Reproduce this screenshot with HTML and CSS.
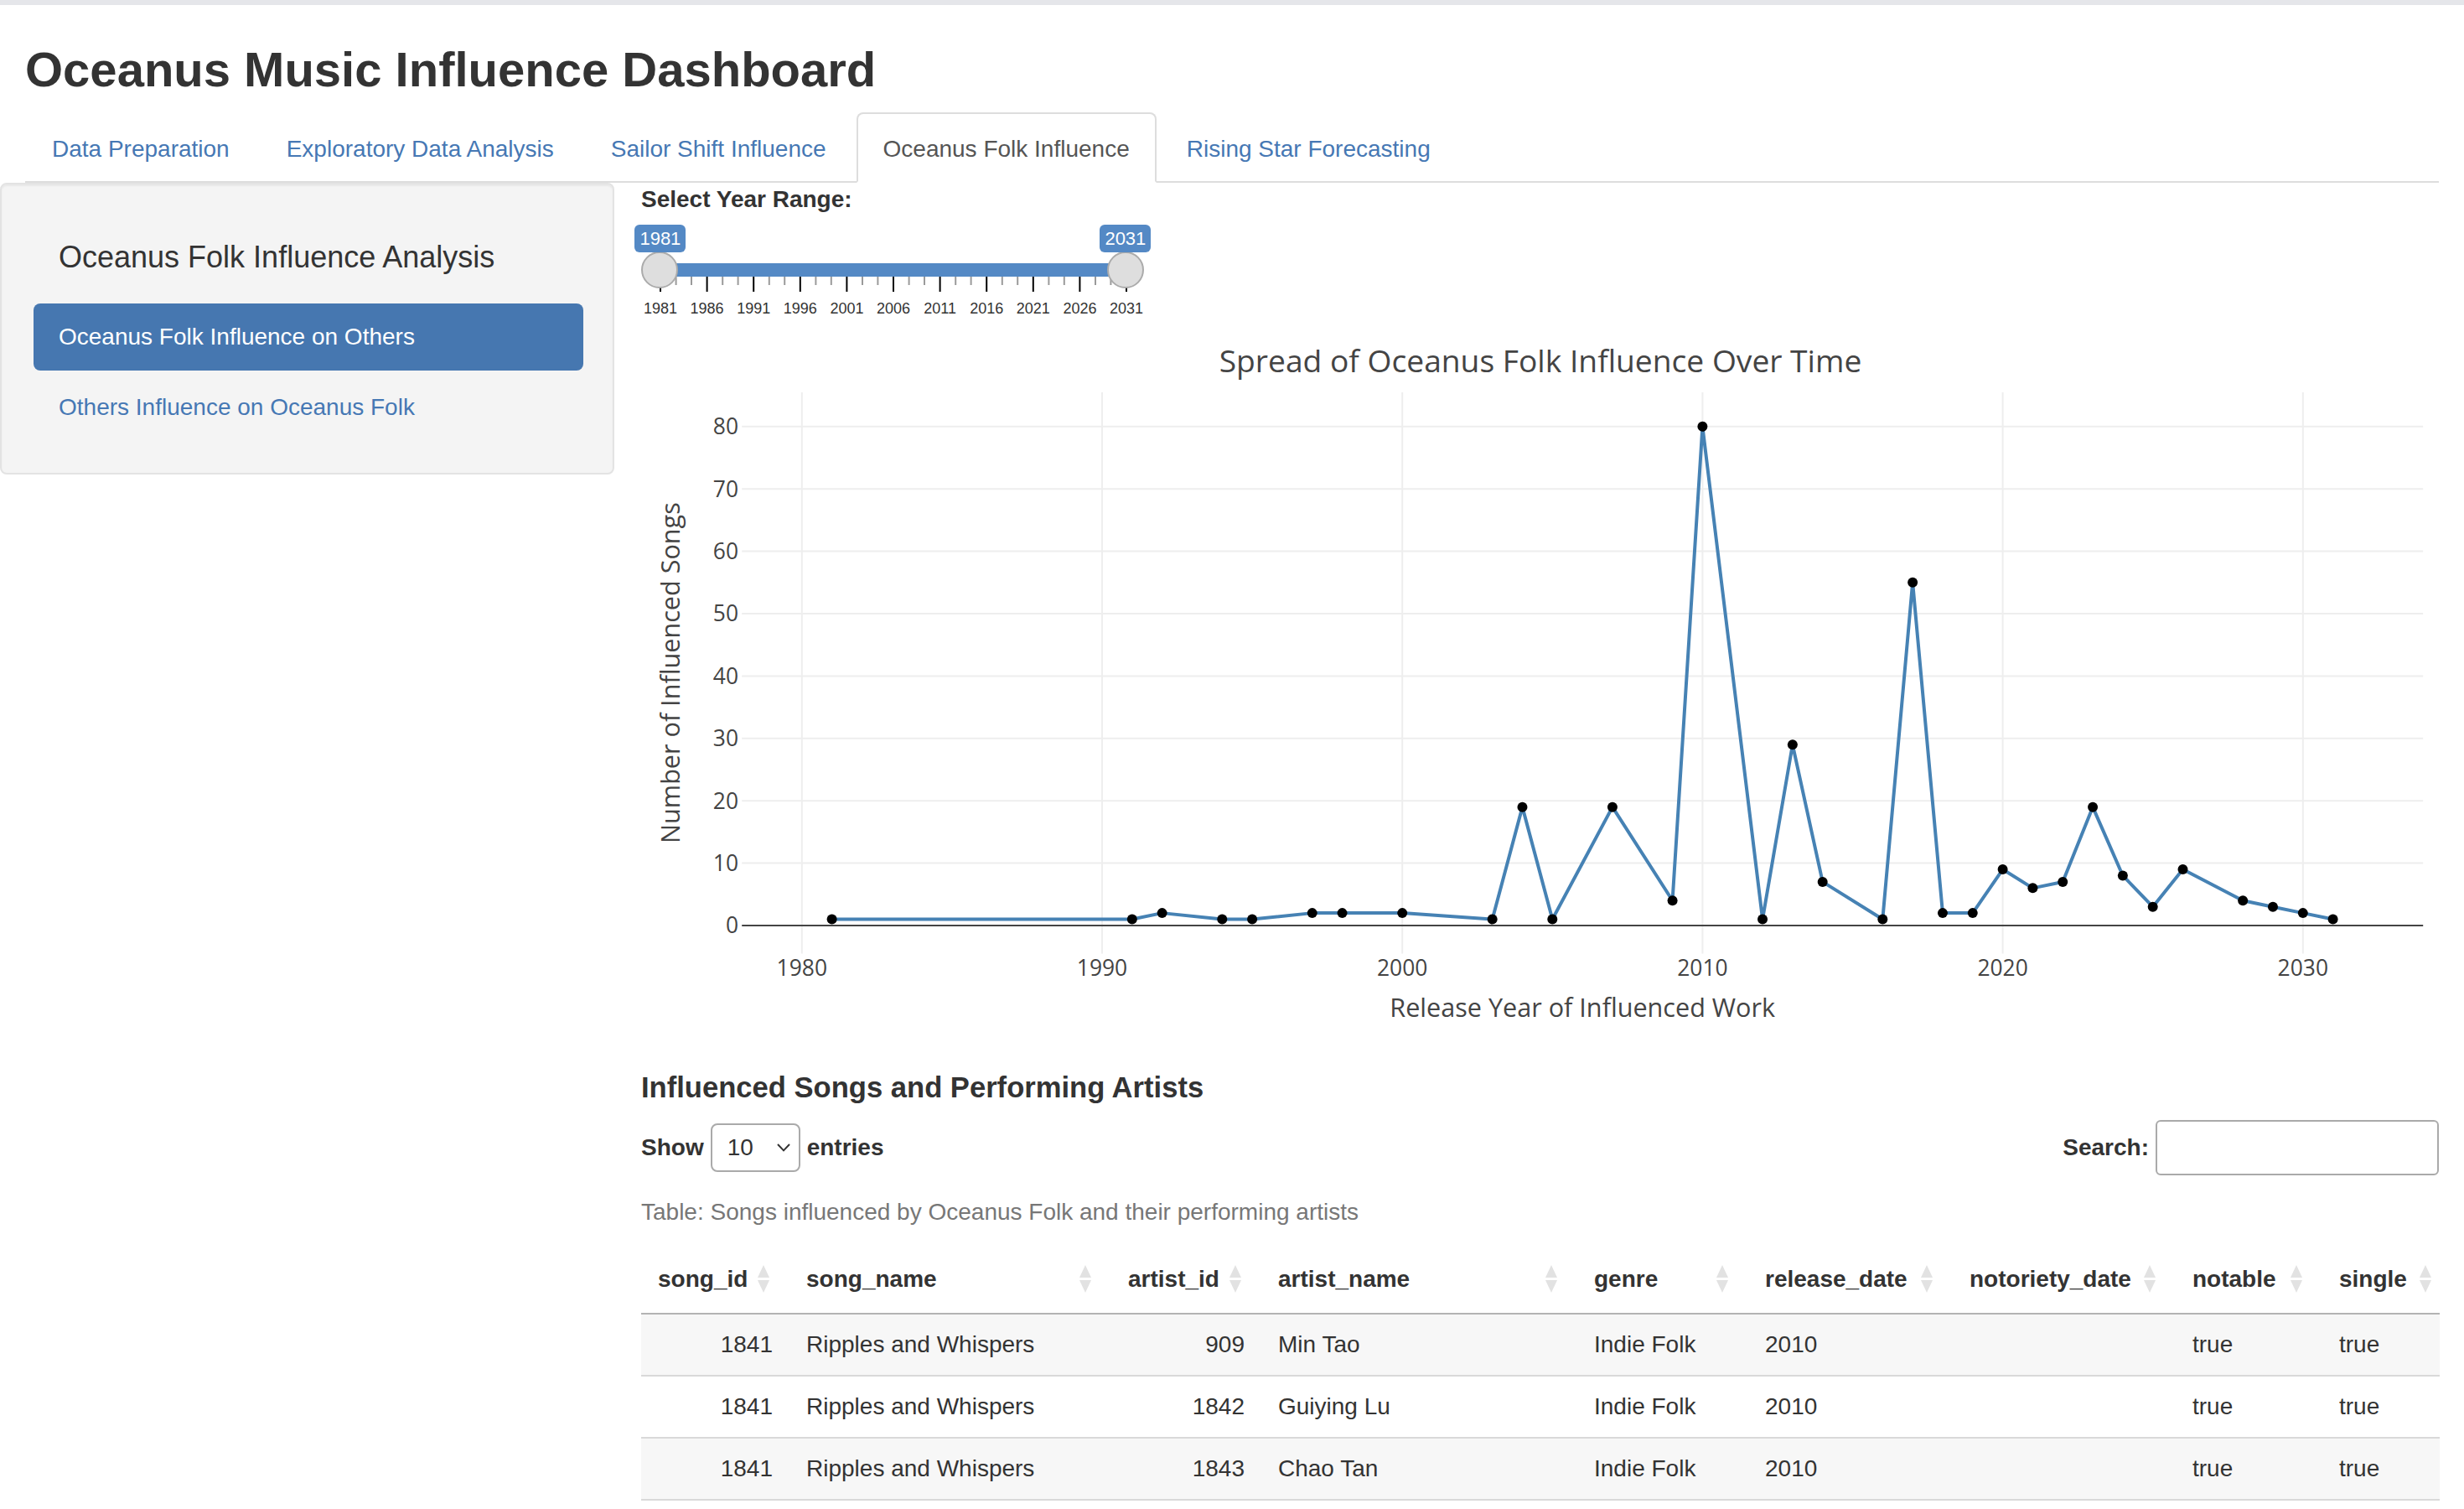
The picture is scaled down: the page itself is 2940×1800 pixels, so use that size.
FILE: index.html
```html
<!DOCTYPE html>
<html lang="en">
<head>
<meta charset="utf-8">
<title>Oceanus Music Influence Dashboard</title>
<link rel="stylesheet" href="styles.css">
</head>
<body>
<div class="page">
  <div class="container">
    <h2 class="title">Oceanus Music Influence Dashboard</h2>
    <ul class="nav-tabs">
      <li><a>Data Preparation</a></li>
      <li><a>Exploratory Data Analysis</a></li>
      <li><a>Sailor Shift Influence</a></li>
      <li class="active"><a>Oceanus Folk Influence</a></li>
      <li><a>Rising Star Forecasting</a></li>
    </ul>
  </div>
  <div class="layout">
    <aside class="well">
      <ul class="nav-stacked">
        <li class="brand">Oceanus Folk Influence Analysis</li>
        <li class="pill active"><a>Oceanus Folk Influence on Others</a></li>
        <li class="pill"><a>Others Influence on Oceanus Folk</a></li>
      </ul>
    </aside>
    <main class="main">
      <div class="form-group">
        <label class="control-label">Select Year Range:</label>
        <div class="irs">
          <span class="irs-line"></span>
          <span class="irs-bar"></span>
          <svg class="irs-grid" width="300" height="28" viewBox="0 0 300 28">
            <g class="minor">
              <line x1="20.8" y1="0" x2="20.8" y2="5"/><line x1="30" y1="0" x2="30" y2="5"/>
              <line x1="48.6" y1="0" x2="48.6" y2="5"/><line x1="57.8" y1="0" x2="57.8" y2="5"/>
              <line x1="76.4" y1="0" x2="76.4" y2="5"/><line x1="85.6" y1="0" x2="85.6" y2="5"/>
              <line x1="104.2" y1="0" x2="104.2" y2="5"/><line x1="113.4" y1="0" x2="113.4" y2="5"/>
              <line x1="132" y1="0" x2="132" y2="5"/><line x1="141.2" y1="0" x2="141.2" y2="5"/>
              <line x1="159.8" y1="0" x2="159.8" y2="5"/><line x1="169" y1="0" x2="169" y2="5"/>
              <line x1="187.6" y1="0" x2="187.6" y2="5"/><line x1="196.8" y1="0" x2="196.8" y2="5"/>
              <line x1="215.4" y1="0" x2="215.4" y2="5"/><line x1="224.6" y1="0" x2="224.6" y2="5"/>
              <line x1="243.2" y1="0" x2="243.2" y2="5"/><line x1="252.4" y1="0" x2="252.4" y2="5"/>
              <line x1="271" y1="0" x2="271" y2="5"/><line x1="280.2" y1="0" x2="280.2" y2="5"/>
            </g>
            <g class="major">
              <line x1="11.5" y1="0" x2="11.5" y2="9"/>
              <line x1="39.3" y1="0" x2="39.3" y2="9"/>
              <line x1="67.1" y1="0" x2="67.1" y2="9"/>
              <line x1="94.9" y1="0" x2="94.9" y2="9"/>
              <line x1="122.7" y1="0" x2="122.7" y2="9"/>
              <line x1="150.5" y1="0" x2="150.5" y2="9"/>
              <line x1="178.3" y1="0" x2="178.3" y2="9"/>
              <line x1="206.1" y1="0" x2="206.1" y2="9"/>
              <line x1="233.9" y1="0" x2="233.9" y2="9"/>
              <line x1="261.7" y1="0" x2="261.7" y2="9"/>
              <line x1="289.5" y1="0" x2="289.5" y2="9"/>
            </g>
            <g class="grid-text">
              <text x="11.5" y="22">1981</text>
              <text x="39.3" y="22">1986</text>
              <text x="67.1" y="22">1991</text>
              <text x="94.9" y="22">1996</text>
              <text x="122.7" y="22">2001</text>
              <text x="150.5" y="22">2006</text>
              <text x="178.3" y="22">2011</text>
              <text x="206.1" y="22">2016</text>
              <text x="233.9" y="22">2021</text>
              <text x="261.7" y="22">2026</text>
              <text x="289.5" y="22">2031</text>
            </g>
          </svg>
          <span class="irs-handle from"></span>
          <span class="irs-handle to"></span>
          <span class="irs-label from">1981</span>
          <span class="irs-label to">2031</span>
        </div>
      </div>

      <svg class="chart" width="1073" height="420" viewBox="0 0 1073 420">
        <g class="gridlines">
          <line x1="95.9" y1="34" x2="95.9" y2="368.7"/>
          <line x1="275" y1="34" x2="275" y2="368.7"/>
          <line x1="454.1" y1="34" x2="454.1" y2="368.7"/>
          <line x1="633.2" y1="34" x2="633.2" y2="368.7"/>
          <line x1="812.3" y1="34" x2="812.3" y2="368.7"/>
          <line x1="991.4" y1="34" x2="991.4" y2="368.7"/>
          <line x1="60.1" y1="314.8" x2="1063.1" y2="314.8"/>
          <line x1="60.1" y1="277.6" x2="1063.1" y2="277.6"/>
          <line x1="60.1" y1="240.4" x2="1063.1" y2="240.4"/>
          <line x1="60.1" y1="203.2" x2="1063.1" y2="203.2"/>
          <line x1="60.1" y1="166" x2="1063.1" y2="166"/>
          <line x1="60.1" y1="128.8" x2="1063.1" y2="128.8"/>
          <line x1="60.1" y1="91.6" x2="1063.1" y2="91.6"/>
          <line x1="60.1" y1="54.4" x2="1063.1" y2="54.4"/>
        </g>
        <line class="zeroline" x1="60.1" y1="352" x2="1063.1" y2="352"/>
        <polyline class="series" points="113.81,348.28 292.91,348.28 310.82,344.56 346.64,348.28 364.55,348.28 400.37,344.56 418.28,344.56 454.1,344.56 507.83,348.28 525.74,281.32 543.65,348.28 579.47,281.32 615.29,337.12 633.2,54.4 669.02,348.28 686.93,244.12 704.84,325.96 740.66,348.28 758.57,147.4 776.48,344.56 794.39,344.56 812.3,318.52 830.21,329.68 848.12,325.96 866.03,281.32 883.94,322.24 901.85,340.84 919.76,318.52 955.58,337.12 973.49,340.84 991.4,344.56 1009.31,348.28"/>
        <g class="markers">
          <circle cx="113.81" cy="348.28" r="3"/><circle cx="292.91" cy="348.28" r="3"/>
          <circle cx="310.82" cy="344.56" r="3"/><circle cx="346.64" cy="348.28" r="3"/>
          <circle cx="364.55" cy="348.28" r="3"/><circle cx="400.37" cy="344.56" r="3"/>
          <circle cx="418.28" cy="344.56" r="3"/><circle cx="454.1" cy="344.56" r="3"/>
          <circle cx="507.83" cy="348.28" r="3"/><circle cx="525.74" cy="281.32" r="3"/>
          <circle cx="543.65" cy="348.28" r="3"/><circle cx="579.47" cy="281.32" r="3"/>
          <circle cx="615.29" cy="337.12" r="3"/><circle cx="633.2" cy="54.4" r="3"/>
          <circle cx="669.02" cy="348.28" r="3"/><circle cx="686.93" cy="244.12" r="3"/>
          <circle cx="704.84" cy="325.96" r="3"/><circle cx="740.66" cy="348.28" r="3"/>
          <circle cx="758.57" cy="147.4" r="3"/><circle cx="776.48" cy="344.56" r="3"/>
          <circle cx="794.39" cy="344.56" r="3"/><circle cx="812.3" cy="318.52" r="3"/>
          <circle cx="830.21" cy="329.68" r="3"/><circle cx="848.12" cy="325.96" r="3"/>
          <circle cx="866.03" cy="281.32" r="3"/><circle cx="883.94" cy="322.24" r="3"/>
          <circle cx="901.85" cy="340.84" r="3"/><circle cx="919.76" cy="318.52" r="3"/>
          <circle cx="955.58" cy="337.12" r="3"/><circle cx="973.49" cy="340.84" r="3"/>
          <circle cx="991.4" cy="344.56" r="3"/><circle cx="1009.31" cy="348.28" r="3"/>
        </g>
        <g class="yticks">
          <text x="58" y="356.7">0</text>
          <text x="58" y="319.5">10</text>
          <text x="58" y="282.3">20</text>
          <text x="58" y="245.1">30</text>
          <text x="58" y="207.9">40</text>
          <text x="58" y="170.7">50</text>
          <text x="58" y="133.5">60</text>
          <text x="58" y="96.3">70</text>
          <text x="58" y="59.1">80</text>
        </g>
        <g class="xticks">
          <text x="95.9" y="382.2">1980</text>
          <text x="275" y="382.2">1990</text>
          <text x="454.1" y="382.2">2000</text>
          <text x="633.2" y="382.2">2010</text>
          <text x="812.3" y="382.2">2020</text>
          <text x="991.4" y="382.2">2030</text>
        </g>
        <text class="axis-title" x="561.6" y="406.5">Release Year of Influenced Work</text>
        <text class="axis-title" transform="translate(23,201.3) rotate(-90)">Number of Influenced Songs</text>
        <text class="chart-title" x="536.5" y="22.2">Spread of Oceanus Folk Influence Over Time</text>
      </svg>

      <h4 class="section-title">Influenced Songs and Performing Artists</h4>

      <div class="dt-top">
        <label class="dt-length">Show
          <span class="select"><span>10</span>
            <svg class="chev" width="8" height="5" viewBox="0 0 8 5"><polyline points="0.5,0.5 4,4.2 7.5,0.5"/></svg>
          </span>
          entries</label>
        <label class="dt-filter">Search:<span class="search-input"></span></label>
      </div>

      <table class="dt">
        <caption>Table: Songs influenced by Oceanus Folk and their performing artists</caption>
        <colgroup>
          <col class="c-songid"><col class="c-songname"><col class="c-artistid"><col class="c-artistname"><col class="c-genre"><col class="c-release"><col class="c-notoriety"><col class="c-notable"><col class="c-single">
        </colgroup>
        <thead>
          <tr>
            <th><div class="th-in"><span>song_id</span><span class="sort"><i class="up"></i><i class="down"></i></span></div></th>
            <th><div class="th-in"><span>song_name</span><span class="sort"><i class="up"></i><i class="down"></i></span></div></th>
            <th><div class="th-in"><span>artist_id</span><span class="sort"><i class="up"></i><i class="down"></i></span></div></th>
            <th><div class="th-in"><span>artist_name</span><span class="sort"><i class="up"></i><i class="down"></i></span></div></th>
            <th><div class="th-in"><span>genre</span><span class="sort"><i class="up"></i><i class="down"></i></span></div></th>
            <th><div class="th-in"><span>release_date</span><span class="sort"><i class="up"></i><i class="down"></i></span></div></th>
            <th><div class="th-in"><span>notoriety_date</span><span class="sort"><i class="up"></i><i class="down"></i></span></div></th>
            <th><div class="th-in"><span>notable</span><span class="sort"><i class="up"></i><i class="down"></i></span></div></th>
            <th class="last"><div class="th-in"><span>single</span><span class="sort"><i class="up"></i><i class="down"></i></span></div></th>
          </tr>
        </thead>
        <tbody>
          <tr>
            <td class="num">1841</td><td>Ripples and Whispers</td><td class="num">909</td><td>Min Tao</td><td>Indie Folk</td><td>2010</td><td></td><td>true</td><td>true</td>
          </tr>
          <tr>
            <td class="num">1841</td><td>Ripples and Whispers</td><td class="num">1842</td><td>Guiying Lu</td><td>Indie Folk</td><td>2010</td><td></td><td>true</td><td>true</td>
          </tr>
          <tr>
            <td class="num">1841</td><td>Ripples and Whispers</td><td class="num">1843</td><td>Chao Tan</td><td>Indie Folk</td><td>2010</td><td></td><td>true</td><td>true</td>
          </tr>
        </tbody>
      </table>
    </main>
  </div>
</div>
</body>
</html>
```

FILE: styles.css
```css
* { box-sizing: border-box; }

html { zoom: 2; }

html, body {
  margin: 0;
  padding: 0;
  overflow: hidden;
  background: #ffffff;
}

body {
  font-family: "Liberation Sans", Arial, Helvetica, sans-serif;
  font-size: 14px;
  line-height: 20px;
  color: #333333;
}

.page {
  width: 1470px;
  height: 900px;
  overflow: hidden;
  border-top: 3px solid #e5e6ea;
}

.container {
  padding: 0 15px;
}

.title {
  margin: 22px 0 9px;
  font-size: 29px;
  line-height: 33px;
  font-weight: 700;
  color: #333333;
}

/* ---------- tabs ---------- */
.nav-tabs {
  display: flex;
  margin: 0;
  padding: 0;
  list-style: none;
  border-bottom: 1px solid #dddddd;
}

.nav-tabs li {
  margin-bottom: -1px;
}

.nav-tabs a {
  display: block;
  margin-right: 2px;
  padding: 11px 15px 9px;
  line-height: 20px;
  border: 1px solid transparent;
  border-radius: 4px 4px 0 0;
  color: #4678b4;
}

.nav-tabs li.active a {
  color: #555555;
  background: #ffffff;
  border-color: #dddddd #dddddd transparent;
}

/* ---------- layout ---------- */
.layout {
  display: flex;
  align-items: flex-start;
  padding-right: 15px;
}

.well {
  flex: none;
  width: 366.5px;
  margin-top: 0;
  padding: 19px;
  background: #f4f4f4;
  border: 1px solid #e3e3e3;
  border-radius: 4px;
  box-shadow: inset 0 1px 1px rgba(0, 0, 0, 0.05);
}

.nav-stacked {
  margin: 0;
  padding: 0;
  list-style: none;
}

.brand {
  height: 50px;
  padding: 15px;
  font-size: 18px;
  line-height: 19px;
  color: #333333;
}

.pill {
  margin-top: 2px;
  margin-right: -1.5px;
}

.pill a {
  display: block;
  padding: 10px 15px;
  border-radius: 4px;
  color: #4678b4;
}

.pill.active a {
  background: #4677b0;
  color: #ffffff;
}

.main {
  flex: 1;
  min-width: 0;
  margin-left: 16px;
}

/* ---------- slider ---------- */
.form-group {
  margin-bottom: 6px;
}

.control-label {
  display: inline-block;
  margin-bottom: 5px;
  font-weight: 700;
}

.irs {
  position: relative;
  width: 300px;
  height: 60px;
}

.irs-line {
  position: absolute;
  left: 11px;
  right: 11px;
  top: 23px;
  height: 8px;
  background: #ededed;
  border-radius: 8px;
}

.irs-bar {
  position: absolute;
  left: 11px;
  width: 278px;
  top: 23px;
  height: 8px;
  background: #5489c5;
}

.irs-grid {
  position: absolute;
  left: 0;
  top: 31px;
  display: block;
}

.irs-grid .major line {
  stroke: #000000;
  stroke-width: 1;
}

.irs-grid .minor line {
  stroke: #9a9a9a;
  stroke-width: 1;
}

.grid-text text {
  font-family: "Liberation Sans", Arial, sans-serif;
  font-size: 9px;
  fill: #333333;
  text-anchor: middle;
}

.irs-handle {
  position: absolute;
  top: 16px;
  width: 22px;
  height: 22px;
  background: #dedede;
  border: 1px solid #ababab;
  border-radius: 50%;
}

.irs-handle.from { left: 0; }
.irs-handle.to { left: 278px; }

.irs-label {
  position: absolute;
  top: 0;
  padding: 1px 3px;
  font-size: 11px;
  line-height: 14.5px;
  color: #ffffff;
  background: #5489c5;
  border-radius: 3px;
}

.irs-label.from { left: -3.8px; }
.irs-label.to { left: 273.7px; }

/* ---------- chart ---------- */
.chart {
  display: block;
}

.chart text {
  font-family: "Open Sans", "Liberation Sans", sans-serif;
  fill: #444444;
}

.gridlines line {
  stroke: #eeeeee;
  stroke-width: 1;
}

.zeroline {
  stroke: #444444;
  stroke-width: 1;
}

.series {
  fill: none;
  stroke: #4682b4;
  stroke-width: 2;
  stroke-linejoin: round;
}

.markers circle {
  fill: #000000;
}

.yticks text {
  font-size: 13.2px;
  text-anchor: end;
}

.xticks text {
  font-size: 13.2px;
  text-anchor: middle;
}

.axis-title {
  font-size: 15.3px;
  text-anchor: middle;
}

.chart-title {
  font-size: 18.6px;
  text-anchor: middle;
}

/* ---------- table ---------- */
.section-title {
  margin: 19px 0 10px;
  font-size: 17.3px;
  line-height: 19.8px;
  font-weight: 700;
}

.dt-top {
  display: flex;
  justify-content: space-between;
  align-items: center;
  height: 31px;
}

.dt-length,
.dt-filter {
  display: flex;
  align-items: center;
  font-weight: 700;
}

.select {
  display: inline-flex;
  align-items: center;
  justify-content: space-between;
  width: 53.5px;
  height: 29px;
  margin: 0 4px 0 4px;
  padding: 0 5px 0 9px;
  border: 1px solid #aaaaaa;
  border-radius: 4px;
  font-weight: 400;
}

.chev polyline {
  fill: none;
  stroke: #333333;
  stroke-width: 1;
}

.search-input {
  display: block;
  width: 169px;
  height: 33px;
  margin-left: 4px;
  border: 1px solid #aaaaaa;
  border-radius: 3px;
}

.dt {
  width: 100%;
  margin-top: 6px;
  table-layout: fixed;
  border-collapse: separate;
  border-spacing: 0;
}

.dt caption {
  caption-side: top;
  padding: 7px 0 10px;
  text-align: left;
  color: #777777;
}

.c-songid { width: 88.5px; }
.c-songname { width: 192px; }
.c-artistid { width: 89.5px; }
.c-artistname { width: 188.5px; }
.c-genre { width: 102px; }
.c-release { width: 122px; }
.c-notoriety { width: 133px; }
.c-notable { width: 87.5px; }
.c-single { width: 70px; }

.dt th {
  padding: 10px 10px 10px;
  text-align: left;
  font-weight: 700;
  border-bottom: 1px solid #b3b3b3;
}

.dt th.last {
  padding-right: 5px;
}

.th-in {
  display: flex;
  align-items: center;
  justify-content: space-between;
}

.sort {
  display: flex;
  flex-direction: column;
  gap: 1.5px;
  margin-right: 2px;
}

.dt th.last .sort {
  margin-right: 0;
}

.sort i {
  display: block;
  width: 0;
  height: 0;
  border-left: 3.5px solid transparent;
  border-right: 3.5px solid transparent;
}

.sort .up { border-bottom: 7.5px solid #e2e2e2; }
.sort .down { border-top: 7.5px solid #e2e2e2; }

.dt td {
  padding: 8px 10px;
  border-top: 1px solid #d9d9d9;
  white-space: nowrap;
}

.dt tbody tr:first-child td { border-top: none; }
.dt tbody tr:last-child td { border-bottom: 1px solid #d9d9d9; }

.dt tbody tr:nth-child(odd) td {
  background: #f7f7f7;
}

.dt td.num {
  text-align: right;
}
```
